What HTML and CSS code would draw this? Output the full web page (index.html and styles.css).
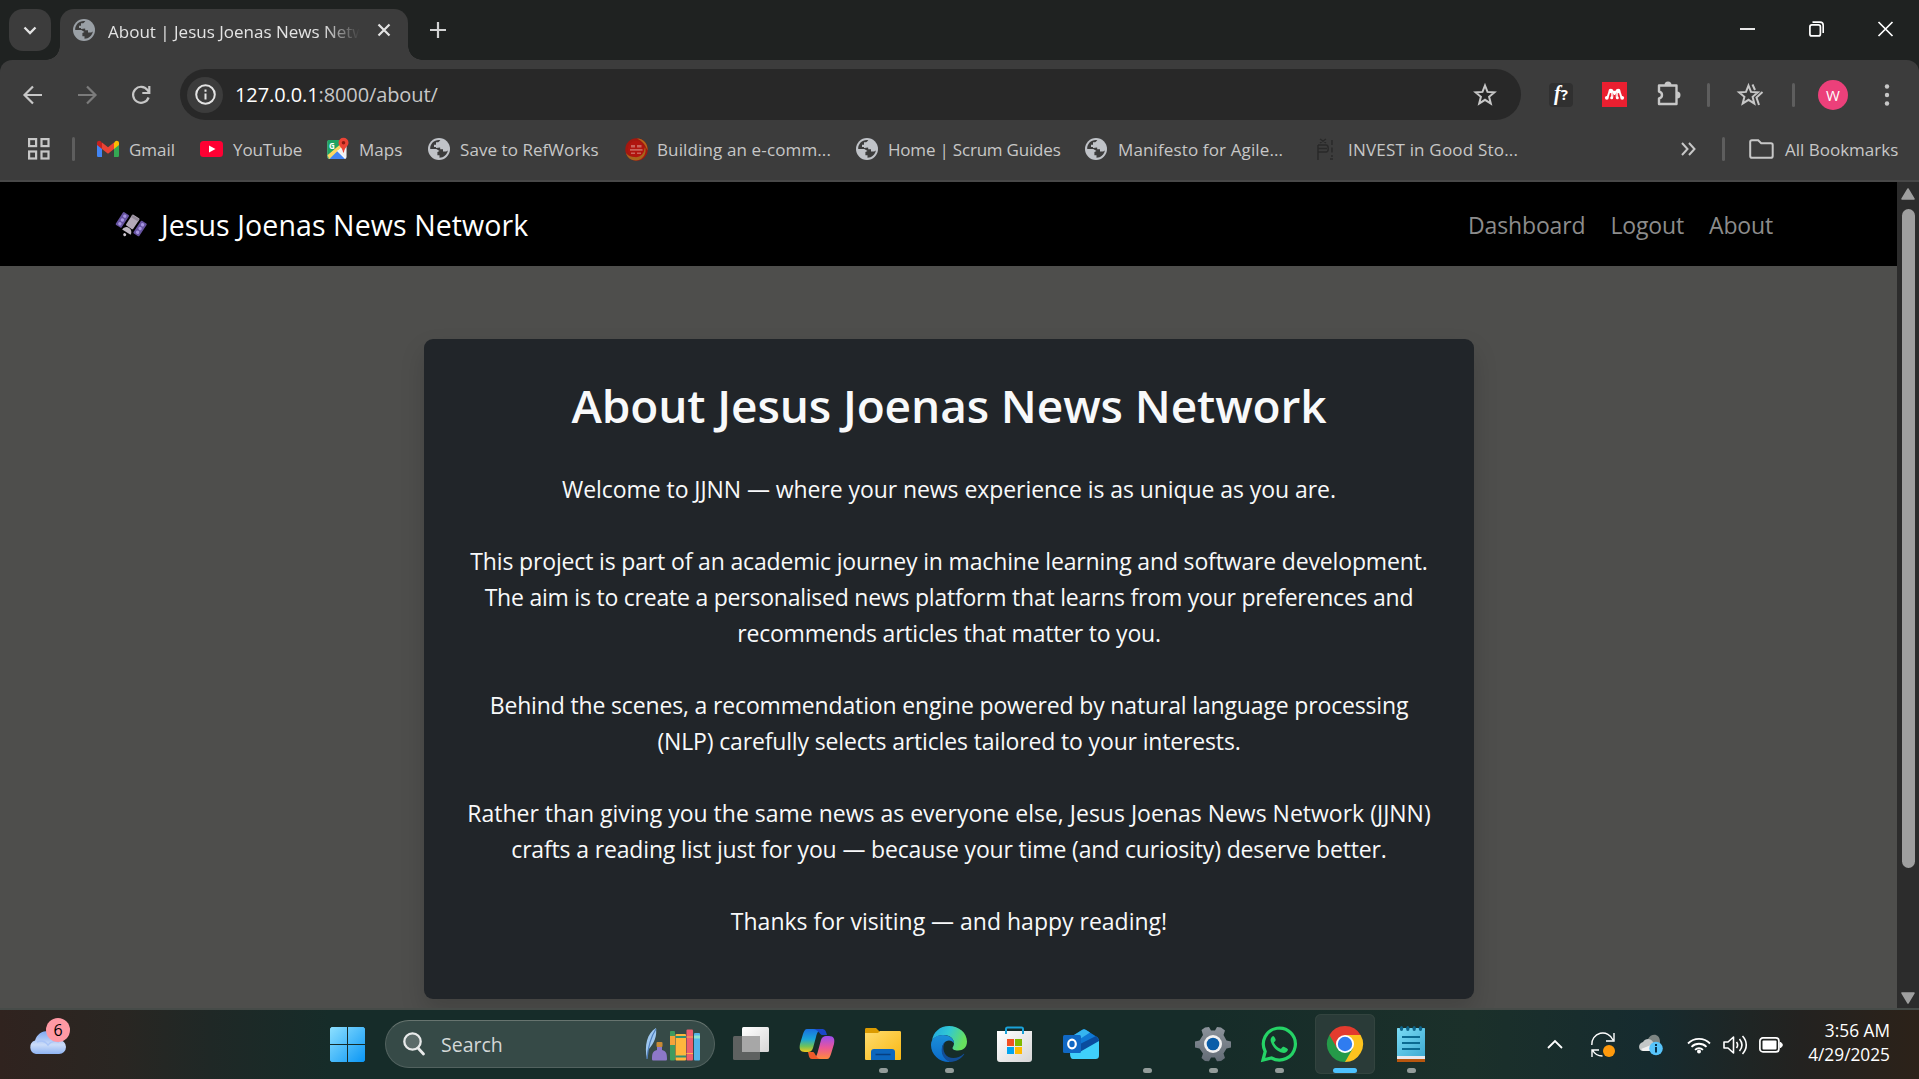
FILE: index.html
```html
<!DOCTYPE html>
<html lang="en">
<head>
<meta charset="utf-8">
<title>About | Jesus Joenas News Network</title>
<link rel="stylesheet" href="styles.css">
</head>
<body>
<svg width="0" height="0" class="defs" aria-hidden="true">
  <defs>
    <symbol id="globe" viewBox="0 0 22 22">
      <circle cx="11" cy="11" r="11" fill="currentColor"/>
      <path d="M12.500 2.300 10.200 4.200H8v2.600H6V9h6.200v2.200H15v2.200h3.200l1.600-.9c-.5 4-4 7.200-8.300 7.300v-2.500H9.400v-3.200l2.100-1L8.300 11H2.200C2 6 6 2 11 2.100z" fill="#3c3c3c"/>
      <path d="M12.500 2.300 11.500 5v2l-3.500.4v2.600l4-.6 1.500.6V8h2.800V5.500L14.500 3z" fill="currentColor"/>
    </symbol>
    <linearGradient id="win" x1="0" y1="0" x2="1" y2="1"><stop offset="0" stop-color="#8de0ff"/><stop offset="1" stop-color="#0a96f5"/></linearGradient>
    <linearGradient id="cloud" x1="0" y1="0" x2="0" y2="1"><stop offset="0" stop-color="#7ea8f2"/><stop offset=".6" stop-color="#cbdcf8"/><stop offset="1" stop-color="#8fb4f3"/></linearGradient>
    <linearGradient id="paper" x1="0" y1="0" x2="1" y2="1"><stop offset="0" stop-color="#fff"/><stop offset="1" stop-color="#d6d6d6"/></linearGradient>
    <linearGradient id="folder" x1="0" y1="0" x2="1" y2="1"><stop offset="0" stop-color="#ffdc6e"/><stop offset="1" stop-color="#f9b813"/></linearGradient>
    <linearGradient id="copA" x1="0" y1="0" x2="0" y2="1"><stop offset="0" stop-color="#1a6fe0"/><stop offset=".45" stop-color="#1aa5d8"/><stop offset=".75" stop-color="#6fc25a"/><stop offset="1" stop-color="#f0c91c"/></linearGradient>
    <linearGradient id="copB" x1="0" y1="0" x2="0" y2="1"><stop offset="0" stop-color="#9a4df0"/><stop offset=".5" stop-color="#e9569a"/><stop offset="1" stop-color="#ff8a3c"/></linearGradient>
    <linearGradient id="edgeA" x1="0" y1="0" x2="1" y2=".3"><stop offset="0" stop-color="#1fa5e2"/><stop offset=".5" stop-color="#31c8d4"/><stop offset="1" stop-color="#67e05e"/></linearGradient>
    <linearGradient id="edgeB" x1="0" y1="0" x2="0" y2="1"><stop offset="0" stop-color="#1b8fd9"/><stop offset="1" stop-color="#0b6ac9"/></linearGradient>
    <linearGradient id="gear" x1="0" y1="0" x2="0" y2="1"><stop offset="0" stop-color="#8c939b"/><stop offset="1" stop-color="#636c76"/></linearGradient>
    <linearGradient id="note" x1="0" y1="0" x2="1" y2="1"><stop offset="0" stop-color="#7adcf5"/><stop offset="1" stop-color="#3fabd2"/></linearGradient>
  </defs>
</svg>

<div class="tabstrip">
  <div class="tab-search"><svg width="14" height="9" viewBox="0 0 14 9"><path d="M1.500 1.500 7 7l5.500-5.500" fill="none" stroke="#e3e3e3" stroke-width="2.300"/></svg></div>
  <div class="tab">
    <svg class="fav" width="22" height="22"><use href="#globe"/></svg>
    <span class="tab-title">About | Jesus Joenas News Network</span>
    <svg class="tab-close" width="14" height="14" viewBox="0 0 14 14"><path d="M1.500 1.500l11 11M12.500 1.500l-11 11" stroke="#e3e3e3" stroke-width="2.200"/></svg>
  </div>
  <svg class="new-tab" width="16" height="16" viewBox="0 0 16 16"><path d="M8 0v16M0 8h16" stroke="#d2d3d3" stroke-width="2.200"/></svg>
  <div class="window-controls">
    <svg width="15" height="16" viewBox="0 0 15 16"><path d="M0 8h15" stroke="#fff" stroke-width="1.800"/></svg>
    <svg width="15" height="16" viewBox="0 0 15 16"><rect x=".9" y="3.900" width="10.500" height="11" rx="2" fill="none" stroke="#fff" stroke-width="1.700"/><path d="M3.500 1.100H11a3.200 3.200 0 0 1 3.200 3.200V12" fill="none" stroke="#fff" stroke-width="1.600"/></svg>
    <svg width="15" height="16" viewBox="0 0 15 16"><path d="M.5 1l14 14M14.500 1l-14 14" stroke="#fff" stroke-width="1.700"/></svg>
  </div>
</div>

<div class="toolbar">
  <div class="nav-buttons">
    <svg width="20" height="20" viewBox="0 0 20 20"><path d="M19 10H2M10 1.500 1.500 10l8.500 8.500" fill="none" stroke="#c7c7c7" stroke-width="2.200"/></svg>
    <svg width="20" height="20" viewBox="0 0 20 20"><path d="M1 10h17M10 1.500l8.500 8.500-8.500 8.500" fill="none" stroke="#7b7b7b" stroke-width="2.200"/></svg>
    <svg width="20" height="20" viewBox="0 0 20 20"><path d="M17.600 12.500A8 8 0 1 1 16.500 5l1.500 2" fill="none" stroke="#c7c7c7" stroke-width="2.200"/><path d="M18.300 1v7h-7" fill="none" stroke="#c7c7c7" stroke-width="2.200"/></svg>
  </div>
  <div class="omnibox">
    <div class="site-info"><svg width="21" height="21" viewBox="0 0 21 21"><circle cx="10.500" cy="10.500" r="9.300" fill="none" stroke="#e3e3e3" stroke-width="2"/><path d="M10.500 9.500v6M10.500 5.500v2.200" stroke="#e3e3e3" stroke-width="2"/></svg></div>
    <span class="url"><b>127.0.0.1</b>:8000/about/</span>
    <svg class="star" width="24" height="24" viewBox="0 0 24 24"><path d="M12 2.500l2.500 6.400 6.900.5-5.300 4.400 1.700 6.700-5.800-3.700-5.800 3.700 1.700-6.700-5.300-4.400 6.900-.5z" fill="none" stroke="#c7c7c7" stroke-width="2"/></svg>
  </div>
  <div class="extensions">
    <div class="ext-font">f<small>?</small></div>
    <svg class="ext-red" width="25" height="25" viewBox="0 0 25 25"><rect width="25" height="25" fill="#ea1f30"/><path d="M4.800 16C7 14.500 6 10 8.500 8.500c2-1 3 2.500 4 2.500s2-3.500 4-2.500C19 10 18 14.500 20.200 16M12.500 10v5.500" fill="none" stroke="#fff" stroke-width="2"/><g fill="#fff"><circle cx="8.800" cy="9" r="2.300"/><circle cx="16.200" cy="9" r="2.300"/><circle cx="12.500" cy="10.500" r="1.800"/><circle cx="4.800" cy="15.800" r="1.900"/><circle cx="9.700" cy="15.800" r="1.500"/><circle cx="15.300" cy="15.800" r="1.500"/><circle cx="20.200" cy="15.800" r="1.900"/></g><path d="M10 10.500v5M15 10.500v5" stroke="#fff" stroke-width="1.500"/><path d="M12.500 13v5" stroke="#ea1f30" stroke-width="2"/></svg>
    <svg class="puzzle" width="26" height="26" viewBox="0 0 26 26"><path d="M3 5.500h17.500V24H3v-5.500c4-1 4-6 0-7z" fill="none" stroke="#c7c7c7" stroke-width="2.400" stroke-linejoin="round"/><path d="M8.500 5a3.500 3.500 0 0 1 7 0zM21 11.500a3.500 3.500 0 0 1 0 7z" fill="#c7c7c7"/></svg>
    <i class="sep"></i>
    <svg class="star2" width="27" height="24" viewBox="0 0 27 24"><path d="M11.500 2.500l2.500 6.400 6.900.5-5.300 4.400 1.700 6.700-5.800-3.700-5.800 3.700 1.700-6.700-5.300-4.400 6.900-.5z" fill="none" stroke="#c7c7c7" stroke-width="2"/><path d="M15.500 1.500 18 7M25.500 9l-6 5.500 2.500 7.500" fill="none" stroke="#c7c7c7" stroke-width="2"/></svg>
    <i class="sep sep-b"></i>
    <div class="avatar">W</div>
    <svg class="dots" width="6" height="22" viewBox="0 0 6 22" fill="#c7c7c7"><circle cx="3" cy="2.500" r="2.200"/><circle cx="3" cy="11" r="2.200"/><circle cx="3" cy="19.500" r="2.200"/></svg>
  </div>
</div>

<div class="bookmarks">
  <svg class="apps" width="22" height="22" viewBox="0 0 22 22"><g fill="none" stroke="#c7c7c7" stroke-width="2.200"><rect x="1.100" y="1.100" width="7" height="7"/><rect x="13.500" y="1.100" width="7" height="7"/><rect x="1.100" y="13.500" width="7" height="7"/><rect x="13.500" y="13.500" width="7" height="7"/></g></svg>
  <i class="sep"></i>
  <div class="bm bm-gmail"><svg width="22" height="22" viewBox="0 0 22 22"><path d="M0 5v12.500c0 1 .6 1.500 1.500 1.500H5V9z" fill="#4285f4"/><path d="M22 5v12.500c0 1-.6 1.500-1.500 1.500H17V9z" fill="#34a853"/><path d="M17 5v6l5-4V5c0-2-2.500-2.800-4-1.500z" fill="#fbbc04"/><path d="M0 5v2l5 4V5L4 3.500C2.500 2.200 0 3 0 5z" fill="#c5221f"/><path d="M5 4.500l6 4.700 6-4.700V11l-6 4.700L5 11z" fill="#ea4335"/></svg><span>Gmail</span></div>
  <div class="bm bm-yt"><svg width="23" height="22" viewBox="0 0 23 22"><rect y="3" width="23" height="16" rx="3.500" fill="#ff0033"/><path d="M9 7.500v7l6.500-3.500z" fill="#fff"/></svg><span>YouTube</span></div>
  <div class="bm bm-maps"><svg width="22" height="22" viewBox="0 0 22 22"><rect x=".5" y="2" width="19" height="19" rx="2" fill="#fff"/><path d="M.5 20V4c0-1.500.5-2 2-2H14l2 5L2 21z" fill="#1fa463"/><path d="M2.500 21 10 13l8 8z" fill="#4285f4"/><path d="M.5 17 14.500 4 17 7 2 21z" fill="#fdd663"/><path d="M.5 4c0-1.500.5-2 2-2H13l2 3L.5 17z" fill="#1fa463"/><path d="M10 12.500l9 8V9z" fill="#f1f1f1"/><text x="2" y="10.500" class="maps-g">G</text><path d="M11.500 4.800a5 5 0 0 1 10 0c0 3.500-4 4.700-4.600 9.700h-.8c-.6-5-4.600-6.200-4.600-9.700z" fill="#ea4335"/><circle cx="16.500" cy="4.800" r="1.800" fill="#8c1b12"/></svg><span>Maps</span></div>
  <div class="bm bm-save"><svg class="fav" width="22" height="22"><use href="#globe"/></svg><span>Save to RefWorks</span></div>
  <div class="bm bm-build"><svg width="23" height="23" viewBox="0 0 23 23"><circle cx="11.500" cy="11.500" r="11.200" fill="#a3170f"/><path d="M1 15c4 6 15 5 19-6 2 5-1 13-9 13.500C6 22.500 2 19.500 1 15z" fill="#a8641c"/><path d="M12 .5c7 0 11 6 10.500 12C20 6 17 3 12 .5z" fill="#b5651b"/><circle cx="11" cy="11" r="8.300" fill="#b0150f"/><path d="M6 7h4v2.500H6zM12 7h4.500v2.500H12zM5 11h12.500v1.800H5zM6 14.500h4V16H6zM12 14.500h4V16h-4z" fill="#c9625a"/></svg><span>Building an e-comm...</span></div>
  <div class="bm bm-home"><svg class="fav" width="22" height="22"><use href="#globe"/></svg><span>Home | Scrum Guides</span></div>
  <div class="bm bm-mani"><svg class="fav" width="22" height="22"><use href="#globe"/></svg><span>Manifesto for Agile...</span></div>
  <div class="bm bm-inv"><svg width="18" height="22" viewBox="0 0 18 22"><path d="M3 1l6 4M9 1 3 5M1 7h8c3 0 3 7 0 7H1M1 7v15M1 10.500h9M15 2v5M15 9.500v5M15 17v2M13 21h3" fill="none" stroke="#292929" stroke-width="1.400"/></svg><span>INVEST in Good Sto...</span></div>
  <svg class="more" width="15" height="14" viewBox="0 0 15 14"><path d="M1 1l5.500 6L1 13M8 1l5.500 6L8 13" fill="none" stroke="#c7c7c7" stroke-width="2"/></svg>
  <i class="sep sep-c"></i>
  <svg class="bm-folder" width="25" height="20" viewBox="0 0 25 20"><path d="M1.200 3c0-1 .7-1.800 1.700-1.800h6.300l3 3H22c1 0 1.700.7 1.700 1.700v11c0 1-.7 1.800-1.700 1.800H2.900c-1 0-1.700-.8-1.700-1.800z" fill="none" stroke="#c7c7c7" stroke-width="2"/></svg>
  <span class="all">All Bookmarks</span>
</div>

<div class="viewport">
  <div class="page">
    <nav class="navbar">
      <div class="brand">
        <svg width="30" height="28" viewBox="0 0 30 28"><g transform="rotate(33 15 14)"><rect x="1.500" y="7" width="7" height="15" rx="1" fill="#6653a0"/><rect x="21" y="4.500" width="7" height="15" rx="1" fill="#6653a0"/><g fill="#a594e0"><circle cx="5" cy="10" r="1.700"/><circle cx="5" cy="14.500" r="1.700"/><circle cx="5" cy="19" r="1.700"/><circle cx="24.500" cy="7.500" r="1.700"/><circle cx="24.500" cy="12" r="1.700"/><circle cx="24.500" cy="16.500" r="1.700"/></g><rect x="10.500" y="4" width="8.500" height="13" rx="1" fill="#b3a9b8"/><path d="M10.500 6h8.500" stroke="#938a99" stroke-width="2.500"/><path d="M10 22.500a5 5 0 0 1 10 0z" fill="#bdb6c0"/><circle cx="15" cy="25.500" r="1.500" fill="#cfc9d2"/></g></svg>
        <span>Jesus Joenas News Network</span>
      </div>
      <div class="links"><a>Dashboard</a><a>Logout</a><a>About</a></div>
    </nav>
    <main class="card">
      <h1>About Jesus Joenas News Network</h1>
      <p class="medium">Welcome to JJNN — where your news experience is as unique as you are.</p>
      <p>This project is part of an academic journey in machine learning and software development.<br><span class="tight">The aim is to create a personalised news platform that learns from your preferences and<br>recommends articles that matter to you.</span></p>
      <p>Behind the scenes, a recommendation engine powered by natural language processing<br>(NLP) carefully selects articles tailored to your interests.</p>
      <p><span class="wide">Rather than giving you the same news as everyone else, Jesus Joenas News Network (JJNN)</span><br>crafts a reading list just for you — because your time (and curiosity) deserve better.</p>
      <p class="wide">Thanks for visiting — and happy reading!</p>
    </main>
  </div>
  <div class="scrollbar">
    <svg width="14" height="12" viewBox="0 0 14 12"><path d="M7 1 13 11H1z" fill="#9f9f9f" stroke="#9f9f9f" stroke-linejoin="round" stroke-width="1.500"/></svg>
    <div class="thumb"></div>
    <svg class="down" width="14" height="12" viewBox="0 0 14 12"><path d="M7 11 1 1h12z" fill="#9f9f9f" stroke="#9f9f9f" stroke-linejoin="round" stroke-width="1.500"/></svg>
  </div>
</div>

<footer class="taskbar">
  <div class="weather">
    <svg width="37" height="23" viewBox="0 0 37 23"><path d="M7 23a7 7 0 0 1-1-13.500C8 3 13 0 19 0s10 4 11 9a7 7 0 0 1 0 14z" fill="url(#cloud)"/><path d="M8 11c4-2 8-1 11 3 3-4 8-4 11-3" fill="none" stroke="#a9c4f7" stroke-width="1.500"/></svg>
    <span class="badge">6</span>
  </div>
  <svg class="start" width="35" height="35" viewBox="0 0 35 35"><path d="M1.500 0H17v17H0V1.500zM18 0h15.500L35 1.500V17H18zM0 18h17v17H1.500L0 33.500zM18 18h17v15.500L33.500 35H18z" fill="url(#win)"/></svg>
  <div class="search">
    <svg width="22" height="24" viewBox="0 0 22 24"><circle cx="9.500" cy="9.500" r="8.200" fill="#5b6b69" stroke="#e8eaea" stroke-width="2.300"/><path d="M15 16l5.500 6" stroke="#e8eaea" stroke-width="2.800" stroke-linecap="round"/></svg>
    <span>Search</span>
    <svg class="books" width="56" height="33" viewBox="0 0 56 33"><path d="M2 31C-1 18 2 5 11 0c1 7-1 15-8 22z" fill="#9fc8f0"/><path d="M2 31C3 20 5 10 11 1" fill="none" stroke="#4f7fbd" stroke-width="1.200"/><rect x="11.500" y="14" width="6" height="5" rx="1" fill="#c98a35"/><path d="M12 19h5v3c4 1 5 3 5 9 0 1-.5 1.500-1.500 1.500h-12c-1 0-1.500-.5-1.500-1.500 0-6 1-8 5-9z" fill="#8d78c9"/><rect x="25" y="3" width="5" height="29.500" rx="1" fill="#3f9b5f"/><path d="M25 8h5v9h-5z" fill="#f5a33b"/><rect x="30.500" y="6" width="10.500" height="26.500" rx="1" fill="#ffb63d"/><path d="M30.500 9h10.500M30.500 28.500h10.500" stroke="#2f8f74" stroke-width="2"/><rect x="41.500" y="1.500" width="6.500" height="31" rx="1" fill="#ee5d6c"/><path d="M41.500 9h6.500M41.500 25.500h6.500" stroke="#ffb14d" stroke-width="1"/><rect x="49" y="5" width="6" height="27.500" rx="1" fill="#55b3e8"/><path d="M49 9h6" stroke="#8de3cf" stroke-width="3"/></svg>
  </div>
  <div class="apps-row">
    <div class="app"><svg width="36" height="36" viewBox="0 0 36 36"><rect y="10" width="27" height="24" rx="1.500" fill="#5e6160"/><rect x="9" y="1" width="27" height="25" rx="1.500" fill="url(#paper)"/><path d="M9 10h18v16H9z" fill="#a7a7a7"/></svg></div>
    <div class="app"><svg width="36" height="36" viewBox="0 0 36 36"><path d="M8 3h15c-4 1-5 4-6 8l-3 11c-1 3-3 4-5 4H6c-5 0-6-3-5-8l3-10c1-3 2-5 4-5z" fill="url(#copA)"/><path d="M14 3h9c3 0 4 2 5 6h-5c-2 0-4-6-9-6z" fill="#1a47c8"/><path d="M28 33H13c4-1 5-4 6-8l3-11c1-3 3-4 5-4h3c5 0 6 3 5 8l-3 10c-1 3-2 5-4 5z" fill="url(#copB)"/><path d="M22 33h-9c-3 0-3-3-4-7h5c2 0 3 7 8 7z" fill="#ee5a2a"/></svg></div>
    <div class="app run"><svg width="36" height="36" viewBox="0 0 36 36"><path d="M0 3.500C0 2.500.5 2 1.500 2H11l4 4v4H0z" fill="#dc9b00"/><path d="M0 7h13l2-2h19.500c1 0 1.500.5 1.500 1.500v26c0 1-.5 1.500-1.500 1.500h-33C.5 34 0 33.500 0 32.500z" fill="url(#folder)"/><path d="M6 34v-8c0-2 1-3 3-3h18c2 0 3 1 3 3v8z" fill="#0c66bd"/><path d="M10.500 28.500h15" stroke="#063f80" stroke-width="1.500"/></svg></div>
    <div class="app run"><svg width="36" height="36" viewBox="0 0 36 36"><path d="M1 15C2 6 9 0 18 0c10 0 18 7 18 15.500 0 6-4 9-9 9-4 0-5.500-1.500-5.500-2.500s1.500-2 1.500-4.500C23 13 19 9 13 9 7 9 2 12 1 15z" fill="url(#edgeA)"/><path d="M0 19C0 12 6 9 12 9c7 0 11 4 11 8.500-1-2-3-3-5-3-4 0-7 4-7 9 0 6 4 10.500 9 12.500C9 37 0 29 0 19z" fill="url(#edgeB)"/><path d="M14.500 15.500c-3 3-3.500 12 3 15.500 5 2.500 11 .5 15-3 .7-.6 1 0 .6.600C30 33 25 36 19.500 36 10 33 8 21 14.500 15.500z" fill="#124d96"/></svg></div>
    <div class="app"><svg width="36" height="36" viewBox="0 0 36 36"><path d="M0 5h35v28c0 2-1 3-3 3H3c-2 0-3-1-3-3z" fill="url(#paper)"/><path d="M9 8V3c0-1 .5-1.500 1.500-1.500h14c1 0 1.500.5 1.500 1.500v5" fill="none" stroke="#1aa2d8" stroke-width="2"/><path d="M10 13h7v7h-7z" fill="#f25022"/><path d="M18 13h7v7h-7z" fill="#7fba00"/><path d="M10 21h7v7h-7z" fill="#00a4ef"/><path d="M18 21h7v7h-7z" fill="#ffb900"/></svg></div>
    <div class="app"><svg width="36" height="36" viewBox="0 0 36 36"><path d="M6 12 19 4c1.500-1 2.500-1 4 0l11 7c1.500 1 2 2 2 4v11H6z" fill="#0f78d4"/><path d="M8 11 19 4c1.500-1 2.500-1 4 0l4 2.500-14 9z" fill="#35b5f0"/><path d="M17 18 33 10l3 4v4L18 28z" fill="#0a4c9e"/><path d="M7 27h8l21-12v14c0 3-1 4-4 4H10c-2 0-3-2-3-6z" fill="#3fd0fb"/><rect y="9" width="18" height="18" rx="1.500" fill="#1068c4"/><ellipse cx="9" cy="18" rx="3.800" ry="4.300" fill="none" stroke="#fff" stroke-width="2.200"/></svg></div>
    <div class="app run"></div>
    <div class="app run"><svg width="36" height="36" viewBox="0 0 36 36"><path d="M10 1.500 14 1l2 3.500h4L22 1l4 .5 4 3-1.500 4.500 3 5.500 4.500 1v6l-4.500 1-3 5L30 32l-4 3-4 .3-2-3.800h-4l-2 3.800L10 35l-3.500-3L8 27.500l-3.500-5L0 21.500v-6l4.500-1L8 9 6.500 4z" fill="url(#gear)"/><circle cx="18" cy="18" r="9" fill="#f1f1f1"/><circle cx="18" cy="18" r="6.300" fill="#0a5da8"/></svg></div>
    <div class="app run"><svg width="36" height="36" viewBox="0 0 36 36"><path d="M2 34l2.200-8.500A16 16 0 1 1 10.500 32z" fill="none" stroke="#25d366" stroke-width="3.200"/><path d="M12 10c-2 1-3 3.500-2 6 2 5.500 6 9.500 11.500 10.800 2.500.5 5-.8 5.500-3.300 0-1-4-3-5-2.800-1 .3-1.500 2.300-2.500 2-3-1-5.500-3.500-6.500-6 0-1 1.800-1.500 1.700-3C14.500 12.500 13 9.700 12 10z" fill="#25d366"/></svg></div>
    <div class="app run active"><svg width="36" height="36" viewBox="0 0 36 36"><path d="M18 18 2.400 9A18 18 0 0 1 33.600 9z" fill="#e33b2e"/><path d="M18 18 33.600 9A18 18 0 0 1 18 36z" fill="#fcc31e"/><path d="M18 18 18 36A18 18 0 0 1 2.400 9z" fill="#259a49"/><path d="M18 9h15.600L26 22.500z" fill="#fcc31e"/><path d="M25.800 22.500 18 36l-5-8z" fill="#259a49"/><path d="M2.400 9 10.200 22.500 18 9z" fill="#e33b2e"/><circle cx="18" cy="18" r="9" fill="#fff"/><circle cx="18" cy="18" r="7.200" fill="#2f7cf0"/></svg></div>
    <div class="app run"><svg width="36" height="36" viewBox="0 0 36 36"><path d="M4 32h28v4H4z" fill="#b8560e"/><path d="M4 28h28v5H4z" fill="#e9e9ee"/><path d="M4 3c0-.6.400-1 1-1h26c.6 0 1 .4 1 1v27H4z" fill="url(#note)"/><g fill="#0e6387"><ellipse cx="8.500" cy="2.500" rx="1.700" ry="2.500"/><ellipse cx="14.800" cy="2.500" rx="1.700" ry="2.500"/><ellipse cx="21.200" cy="2.500" rx="1.700" ry="2.500"/><ellipse cx="27.500" cy="2.500" rx="1.700" ry="2.500"/></g><path d="M9 11h18M9 17h18M9 23h18" stroke="#0a6a91" stroke-width="2"/></svg></div>
  </div>
  <div class="tray">
    <svg width="16" height="9" viewBox="0 0 16 9"><path d="M1 8l7-7 7 7" fill="none" stroke="#fff" stroke-width="1.800"/></svg>
    <svg class="t2" width="24" height="24" viewBox="0 0 24 24"><path d="M.8 12A11 11 0 0 1 22 7M23 0v8h-8M1 24v-7h7M1.500 17c2 4 6 6 10 6" fill="none" stroke="#fff" stroke-width="1.400"/><circle cx="18" cy="18" r="6" fill="#ff9a0c"/></svg>
    <svg class="t3" width="24" height="22" viewBox="0 0 24 22"><path d="M9 5c3-6 12-6 12 3v6H9z" fill="#7d8583"/><path d="M3 17c-4-1-4-8 1-9 2-4 8-4 10 0l3 9z" fill="#c3c7c7"/><path d="M2 15l10-4v6H4z" fill="#f0f0f0"/><circle cx="17" cy="14.500" r="6.800" fill="#57c4fb"/><path d="M17 13v5.500M17 10v2" stroke="#08334d" stroke-width="2"/></svg>
    <svg class="t4" width="24" height="18" viewBox="0 0 24 18"><g fill="none" stroke="#fff" stroke-width="1.800"><path d="M1 7.500a15.500 15.500 0 0 1 22 0M4.500 10.800a10.800 10.800 0 0 1 15 0M8 13.800a6 6 0 0 1 8 0"/></g><circle cx="12" cy="15.500" r="2" fill="#fff"/></svg>
    <svg class="t5" width="24" height="20" viewBox="0 0 24 20"><path d="M1 7h4l5.500-5v16L5 13H1zM13.500 7c1.500 2 1.500 4 0 6M16.500 4c3.300 4 3.300 8 0 12M19.500 1c5 5.500 5 12.500 0 18" fill="none" stroke="#fff" stroke-width="1.600" stroke-linejoin="round"/></svg>
    <svg class="t6" width="24" height="16" viewBox="0 0 24 16"><rect x=".9" y=".9" width="19" height="14" rx="3" fill="none" stroke="#fff" stroke-width="1.700"/><rect x="3.500" y="3.500" width="14" height="9" rx="1" fill="#fff"/><path d="M21 5.500c3 0 3 5 0 5z" fill="#fff" stroke="#fff"/></svg>
    <div class="clock"><span>3:56 AM</span><span>4/29/2025</span></div>
  </div>
</footer>
</body>
</html>
```
FILE: styles.css
```css
* { box-sizing: border-box; }
body { margin: 0; width: 1919px; height: 1079px; overflow: hidden; display: flex; flex-direction: column; font-family: "Open Sans", "Noto Sans", sans-serif; background: #1f2221; color: #fff; }
svg { display: block; flex: none; overflow: visible; }
.defs { position: absolute; }
span { white-space: nowrap; }

.tabstrip { height: 60px; flex: none; display: flex; align-items: flex-start; padding: 9px 26px 0 9px; background: #1f2221; }
.tab-search { width: 42px; height: 42px; border-radius: 14px; background: #3c3c3c; display: grid; place-items: center; }
.tab { position: relative; width: 348px; height: 51px; margin-left: 9px; padding: 0 17px 9px 13px; border-radius: 14px 14px 0 0; background: #3c3c3c; display: flex; align-items: center; }
.tab::before, .tab::after { content: ""; position: absolute; bottom: 0; width: 14px; height: 14px; }
.tab::before { left: -14px; background: radial-gradient(circle at 0 0, transparent 13.5px, #3c3c3c 14px); }
.tab::after { right: -14px; background: radial-gradient(circle at 100% 0, transparent 13.5px, #3c3c3c 14px); }
.tab .fav { color: #9aa0a6; }
.tab-title { margin: 4px 0 0 13px; width: 252px; overflow: hidden; font-size: 17px; line-height: 26px; color: #e3e3e3; -webkit-mask-image: linear-gradient(90deg, #000 215px, transparent 252px); mask-image: linear-gradient(90deg, #000 215px, transparent 252px); }
.tab-close { margin-left: auto; }
.new-tab { margin: 13px 0 0 22px; }
.window-controls { margin: 12px 0 0 auto; display: flex; gap: 54px; }

.toolbar { height: 60px; padding: 9px 0 0 23px; flex: none; background: #3c3c3c; border-radius: 12px 12px 0 0; display: flex; }
.nav-buttons { display: flex; gap: 34px; align-items: center; width: 157px; height: 51px; }
.omnibox { width: 1341px; height: 51px; border-radius: 26px; background: #282828; display: flex; align-items: center; padding: 0 24px 0 7px; }
.site-info { width: 36px; height: 36px; border-radius: 50%; background: #3c3c3c; display: grid; place-items: center; }
.url { margin-left: 12px; font-size: 20px; letter-spacing: -.1px; color: #c7c7c7; }
.url b { font-weight: 400; color: #fff; }
.star { margin-left: auto; }
.extensions { display: flex; align-items: center; height: 51px; }
.ext-font { margin-left: 28px; width: 24px; height: 24px; border-radius: 4px; background: #303030; font: italic bold 20px/20px "Liberation Serif", serif; text-align: center; color: #fff; }
.ext-font small { font: bold 15px "Open Sans", sans-serif; }
.ext-red { margin-left: 29px; }
.puzzle { margin: -3px 0 0 29px; }
.sep { width: 3px; height: 24px; border-radius: 2px; background: #5e5e5e; }
.extensions .sep { margin-left: 25px; }
.star2 { margin-left: 27px; }
.extensions .sep-b { margin-left: 28px; }
.avatar { margin-left: 23px; width: 30px; height: 30px; border-radius: 50%; background: #ec407a; text-align: center; font-size: 15px; line-height: 30px; }
.dots { margin-left: 36px; }

.bookmarks { height: 62px; flex: none; padding: 0 0 2px 28px; background: #3c3c3c; border-bottom: 2px solid #484848; display: flex; align-items: center; font-size: 17px; color: #c7c7c7; }
.bm { display: flex; align-items: center; gap: 10px; width: 103px; }
.bookmarks .sep { margin: 0 22px 0 22px; }
.bm .fav { color: #c0c3c8; }
.bm-yt { width: 127px; letter-spacing: -.1px; }
.bm-maps { width: 101px; }
.bm-save { width: 197px; letter-spacing: .06px; }
.bm-build { width: 231px; gap: 9px; letter-spacing: .13px; }
.bm-home { width: 229px; letter-spacing: -.2px; }
.bm-mani { width: 232px; gap: 11px; letter-spacing: .13px; }
.bm-inv { width: 364px; gap: 13px; letter-spacing: .2px; }
.maps-g { font: bold 8px "Open Sans", sans-serif; fill: #fff; }
.bookmarks .sep-c { margin: 0 24px 0 26px; }
.all { margin-left: 11px; }

.viewport { height: 826px; flex: none; display: flex; }
.page { width: 1897px; background: #4e4e4c; }
.navbar { height: 84px; padding: 2px 124px 0 116px; background: #000; display: flex; align-items: center; justify-content: space-between; }
.brand { display: flex; align-items: center; gap: 15px; font-size: 28.5px; letter-spacing: .1px; }
.links { display: flex; gap: 25px; font-size: 23px; letter-spacing: -.15px; color: #8c8c8c; }
.card { width: 1050px; height: 660px; margin: 73px 0 0 424px; padding-top: 37px; border-radius: 9px; background: #212529; box-shadow: 0 12px 24px rgba(0, 0, 0, .15); text-align: center; color: #f8f9fa; white-space: nowrap; }
.card h1 { margin: 0 0 37px; font-size: 46px; line-height: 58px; font-weight: 600; letter-spacing: -.1px; }
.card p { margin: 0 0 36px; font-size: 23px; line-height: 36px; letter-spacing: -.155px; }
.card .medium { letter-spacing: -.07px; }
.card .tight { letter-spacing: -.225px; }
.card .wide { letter-spacing: 0; }
.scrollbar { width: 22px; background: #2c2c2c; display: flex; flex-direction: column; align-items: center; padding-top: 6px; }
.thumb { width: 13px; height: 659px; border-radius: 7px; margin: 9px 0 124px; background: #9f9f9f; }

.taskbar { position: relative; height: 71px; flex: none; border-top: 2px solid #464b48; display: flex; align-items: flex-start; background: linear-gradient(90deg, #30231f 0, #292622 120px, #1f2826 210px, #162c29 330px, #162c29 1200px, #1b302a 1470px, #162b2f 1650px, #1f2524 1750px, #232220 1800px, #2c2219 1919px); }
.weather { position: relative; margin: 21px 0 0 29px; width: 37px; }
.badge { position: absolute; left: 17px; top: -13px; width: 24px; height: 24px; border-radius: 50%; background: #ff99a4; color: #000; font-size: 16px; line-height: 24px; text-align: center; }
.start { margin: 17px 0 0 264px; }
.search { margin: 10px 0 0 20px; width: 330px; height: 48px; border-radius: 24px; border: 1.5px solid #52625f; border-top-color: #67746f; background: #364a47; display: flex; align-items: center; padding: 0 13px 0 17px; }
.search span { margin-left: 16px; font-size: 19.5px; color: #d3d8d7; }
.books { margin-left: auto; }
.apps-row { margin: 4px 0 0 6px; display: grid; grid-template-columns: repeat(11, 60px); gap: 6px; }
.app { position: relative; height: 60px; padding: 12px; border-radius: 6px; }
.run::after { content: ""; position: absolute; left: 25.5px; bottom: 1px; width: 9px; height: 5px; border-radius: 3px; background: #939c9a; }
.active { background: #2a3b38; box-shadow: inset 0 0 0 1px #33443f; }
.active::after { left: 18px; width: 24px; background: #4cc2ff; }
.tray { margin: 0 29px 0 auto; height: 69px; display: flex; align-items: center; }
.t2 { margin-left: 28px; }
.t3 { margin-left: 24px; }
.t4 { margin-left: 24px; }
.t5, .t6 { margin-left: 12px; }
.clock { width: 107px; margin-top: -3px; font-size: 17.3px; line-height: 24px; text-align: right; }
.clock span { display: block; }
```
